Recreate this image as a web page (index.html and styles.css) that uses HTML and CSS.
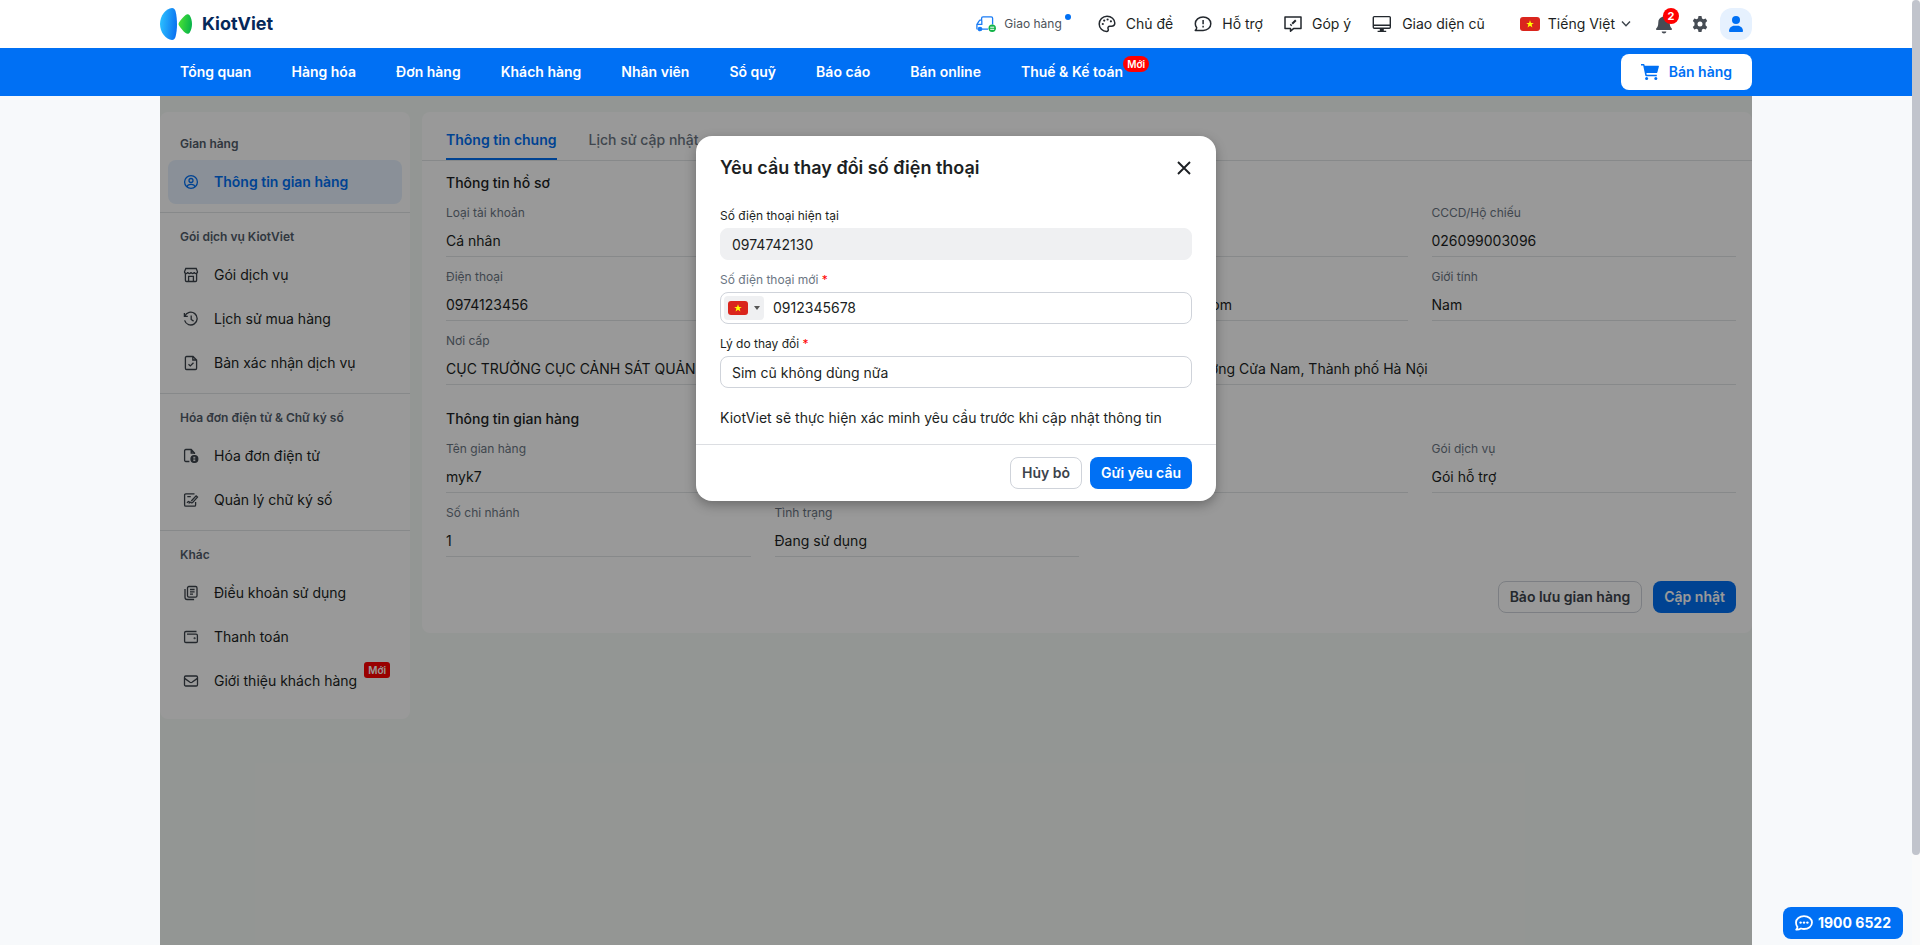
FILE: index.html
```html
<!DOCTYPE html>
<html lang="vi">
<head>
    <meta charset="UTF-8">
    <meta name="viewport" content="width=device-width, initial-scale=1.0">
    <title>KiotViet</title>
    <link rel="stylesheet" href="styles.css">
</head>
<body>

    <!-- Shared flag symbol -->
    <svg class="defs" aria-hidden="true">
        <symbol id="flag-vn" viewBox="0 0 20 14">
            <rect width="20" height="14" rx="3" fill="#da251d"/>
            <path d="M10 3.200l1 2.700h2.800l-2.200 1.700.8 2.800-2.400-1.700-2.400 1.700.8-2.800-2.200-1.700H9z" fill="#ff0"/>
        </symbol>
    </svg>

    <div class="page">

        <header class="topbar">
            <a href="#" class="logo">
                <svg width="32" height="32" viewBox="0 0 32 32">
                    <defs>
                        <linearGradient id="logoBlue" x1="0" x2="1" y1="0.4" y2="0.6">
                            <stop offset="0" stop-color="#2cc0ff"/>
                            <stop offset="1" stop-color="#0a70f0"/>
                        </linearGradient>
                        <linearGradient id="logoGreen" x1="0" x2="1" y1="0.4" y2="0.6">
                            <stop offset="0" stop-color="#4be234"/>
                            <stop offset="1" stop-color="#05b14a"/>
                        </linearGradient>
                    </defs>
                    <path d="M12 0c2 0 3 1.200 3.600 3.500C16.500 7 17 11.500 17 16s-.5 9-1.400 12.500C15 30.800 14 32 12 32 6 31.500 0 24.500 0 16S6 .5 12 0z" fill="url(#logoBlue)"/>
                    <path d="M19 14.500c2-3 4.500-6 6.600-7.600 1.600-1.100 3.400-.8 4.300.9 1.300 2.300 2.100 5 2.100 8.200s-.8 5.900-2.100 8.200c-.9 1.700-2.700 2-4.300.9-2.100-1.600-4.600-4.600-6.600-7.600-.6-1-.6-2 0-3z" fill="url(#logoGreen)"/>
                </svg>
                <span>KiotViet</span>
            </a>

            <nav class="topbar-links">
                <a href="#" class="delivery">
                    <svg width="20" height="16" viewBox="0 0 20 16" fill="none" stroke="#1a7cf5" stroke-width="1.300">
                        <path d="M5.600 4V2.200C5.600 1.400 6.200.8 7 .8h8.200c.8 0 1.400.6 1.400 1.400v6.300M6 13.200h6"/>
                        <path d="M6 4.200H4.300c-.6 0-1 .3-1.300.9L.9 8.400v4.100c0 .4.300.7.700.7M1 8.400h4.800V4.200"/>
                        <circle cx="4" cy="13" r="1.700" fill="#1a7cf5"/>
                        <circle cx="16.200" cy="12.300" r="3.700" fill="#12b347" stroke="none"/>
                        <path d="M14.200 11.200h4M14.200 13.300h4" stroke="#fff" stroke-width="1"/>
                    </svg>
                    Giao hàng<i class="dot"></i>
                </a>
                <a href="#">
                    <svg width="18" height="18" viewBox="0 0 18 18" fill="none" stroke="#23282e" stroke-width="1.500">
                        <path d="M9 1.200c4.400 0 7.800 3 7.800 6.900 0 2.200-1.500 3.200-3.500 3.200h-1.500c-1.500 0-2.300 1.300-1.700 2.500.6 1.300 0 2.700-1.500 2.700C4.600 16.500 1.200 13.200 1.200 9S4.600 1.200 9 1.200z"/>
                        <g fill="#23282e" stroke="none"><circle cx="4.800" cy="9" r="1.100"/><circle cx="6.200" cy="5.600" r="1.100"/><circle cx="9.600" cy="4.500" r="1.100"/><circle cx="12.900" cy="6.300" r="1.100"/></g>
                    </svg>
                    Chủ đề
                </a>
                <a href="#">
                    <svg width="18" height="18" viewBox="0 0 18 18" fill="none" stroke="#23282e" stroke-width="1.500" stroke-linejoin="round">
                        <path d="M1.300 15.400c.8-.8 1.300-1.600 1.400-2.700C1.800 11.500 1.300 10.200 1.300 8.700c0-3.800 3.500-6.700 7.800-6.700s7.700 2.900 7.700 6.700-3.400 6.700-7.700 6.700z"/>
                        <path d="M9.100 4.900v4.400M9.100 10.700v1.700"/>
                    </svg>
                    Hỗ trợ
                </a>
                <a href="#">
                    <svg width="18" height="18" viewBox="0 0 18 18" fill="none" stroke="#23282e" stroke-width="1.500" stroke-linejoin="round">
                        <path d="M1 2h16v11.600H9.500L6.500 16.300v-2.700H1z"/>
                        <path d="M11.800 5.200L8.200 8.800M7.500 9.500l-1 1" stroke-width="2"/>
                    </svg>
                    Góp ý
                </a>
                <a href="#">
                    <svg width="20" height="18" viewBox="0 0 20 18" fill="none" stroke="#23282e" stroke-width="1.400">
                        <rect x="1.300" y="1.600" width="17" height="11.600" rx="1"/>
                        <path d="M1.500 10.200h16.800M5.600 16.400h8.600" /><path d="M7.800 13.200h4v3h-4z" fill="#23282e" stroke="none"/>
                    </svg>
                    Giao diện cũ
                </a>
                <button type="button" class="language">
                    <svg width="20" height="14"><use href="#flag-vn"/></svg>
                    Tiếng Việt
                    <svg class="chevron" width="10" height="6" viewBox="0 0 10 6" fill="none" stroke="#3c434b" stroke-width="1.400"><path d="M1 .6l4 4.200L9 .6"/></svg>
                </button>
                <button type="button" class="icon-btn bell" aria-label="Thông báo">
                    <svg width="16" height="20" viewBox="0 0 16 20" fill="#464c54">
                        <path d="M8 1c.8 0 1.200.5 1.200 1.200v.5c2.800.6 4.500 2.800 4.500 5.500 0 3.200.6 4.700 1.900 6 .8.900.3 1.900-.8 1.900H1.200c-1.100 0-1.600-1-.8-1.900 1.300-1.300 1.900-2.800 1.900-6 0-2.700 1.700-4.900 4.500-5.500v-.5C6.800 1.500 7.200 1 8 1z"/>
                        <path d="M5.700 17.500h4.600c0 1.200-1 2-2.300 2s-2.300-.8-2.300-2z"/>
                    </svg>
                    <span class="count">2</span>
                </button>
                <button type="button" class="icon-btn" aria-label="Thiết lập">
                    <svg width="16" height="16" viewBox="0 0 16 16" fill="#464c54" fill-rule="evenodd">
                        <path d="M6.500 0h3l.5 2.400 1.500.8 2.200-.8 1.500 2.600-1.700 1.700v2.600l1.700 1.700-1.500 2.600-2.200-.8-1.500.8-.5 2.400h-3L6 13.600l-1.500-.8-2.200.8L.8 11l1.700-1.700V6.700L.8 5l1.500-2.600 2.200.8L6 2.400zM8 5.500a2.500 2.500 0 100 5 2.500 2.500 0 000-5z"/>
                    </svg>
                </button>
                <button type="button" class="avatar" aria-label="Tài khoản">
                    <svg width="14" height="16" viewBox="0 0 14 16" fill="#0070f4">
                        <circle cx="7" cy="4" r="4"/><path d="M0 15.200C0 12 2.400 9.700 5.300 9.700h3.400c2.900 0 5.300 2.300 5.300 5.500 0 .5-.4.8-.8.8H.8c-.4 0-.8-.3-.8-.8z"/>
                    </svg>
                </button>
            </nav>
        </header>

        <nav class="mainnav">
            <a href="#">Tổng quan</a>
            <a href="#">Hàng hóa</a>
            <a href="#">Đơn hàng</a>
            <a href="#">Khách hàng</a>
            <a href="#">Nhân viên</a>
            <a href="#">Sổ quỹ</a>
            <a href="#">Báo cáo</a>
            <a href="#">Bán online</a>
            <a href="#">Thuế &amp; Kế toán<span class="nav-badge">Mới</span></a>
            <button type="button" class="sell">
                <svg width="18" height="16" viewBox="0 0 18 16" fill="#0070f4">
                    <path d="M0 0h2.600c.5 0 .8.3.9.700L3.700 1.700h13.500c.5 0 .8.500.7.900l-1.500 5.600c-.1.500-.6.900-1.200.9H5.400l.3 1.600h10.100v1.500H5.200c-.5 0-.8-.3-.9-.7L2.200 1.500H0z"/>
                    <circle cx="5.600" cy="14.500" r="1.500"/><circle cx="14.800" cy="14.500" r="1.500"/>
                </svg>
                Bán hàng
            </button>
        </nav>

        <main class="content">

            <aside class="sidebar">
                <section>
                    <h2>Gian hàng</h2>
                    <a href="#" class="active">
                        <svg viewBox="0 0 16 16"><circle cx="8" cy="8" r="6.400"/><circle cx="8" cy="6.500" r="2"/><path d="M4 12.800c.3-1.700 1.700-2.500 4-2.500s3.700.8 4 2.500"/></svg>
                        Thông tin gian hàng
                    </a>
                </section>
                <section>
                    <h2>Gói dịch vụ KiotViet</h2>
                    <a href="#">
                        <svg viewBox="0 0 16 16"><path d="M2.800 1.500h10.400l1.300 3.300c0 1-.7 1.700-1.700 1.700-.9 0-1.600-.6-1.600-1.500 0 .9-.7 1.500-1.600 1.500S8 5.900 8 5c0 .9-.7 1.500-1.600 1.500S4.800 5.900 4.800 5c0 .9-.7 1.500-1.600 1.500-1 0-1.700-.7-1.700-1.700zM2.400 6.500v6.800c0 .7.500 1.200 1.200 1.200h8.800c.7 0 1.200-.5 1.200-1.200V6.500M5.600 14.500V9.400h4.800v5.100"/></svg>
                        Gói dịch vụ
                    </a>
                    <a href="#">
                        <svg viewBox="0 0 16 16"><path d="M1.400 2v3.400h3.400M1.800 5.200a6.400 6.400 0 11-.2 4.200M8.200 4.500v4l2.400 1.600"/></svg>
                        Lịch sử mua hàng
                    </a>
                    <a href="#">
                        <svg viewBox="0 0 16 16"><path d="M10 1.500H3.600c-.7 0-1.200.5-1.200 1.200v10.600c0 .7.500 1.200 1.200 1.200h8.800c.7 0 1.200-.5 1.200-1.200V5zM9.800 1.700V5h3.500M5.500 9.200l1.800 1.700 3.200-3.200"/></svg>
                        Bản xác nhận dịch vụ
                    </a>
                </section>
                <section>
                    <h2>Hóa đơn điện tử &amp; Chữ ký số</h2>
                    <a href="#">
                        <svg viewBox="0 0 16 16"><path d="M6.400 13.500H2.800c-.7 0-1.200-.5-1.200-1.200V2.700c0-.7.500-1.200 1.200-1.200h5.400L11.500 5v1M8.200 1.700V5h3.200"/><circle cx="11.400" cy="11" r="3.400" fill="currentColor"/><path d="M10.300 9.300h2M10.300 11h2M10.300 12.600h2" stroke="#fff" stroke-width="1"/></svg>
                        Hóa đơn điện tử
                    </a>
                    <a href="#">
                        <svg viewBox="0 0 16 16"><path d="M11.500 1.900H2.800c-.7 0-1.200.5-1.200 1.200v9.800c0 .7.500 1.200 1.200 1.200h8.600c.7 0 1.200-.5 1.200-1.200V10M4.300 4.700h3.500M4 10.800c1.400-1.800 2.200-1.800 2.300 0 1-.9 1.500-.8 2 0l1.200-.2 5-5.500-1.400-1.300L8.300 9"/></svg>
                        Quản lý chữ ký số
                    </a>
                </section>
                <section>
                    <h2>Khác</h2>
                    <a href="#">
                        <svg viewBox="0 0 16 16"><rect x="4.500" y="1.500" width="9.500" height="10.600" rx="1.400"/><path d="M2 4v8.300c0 1.200.9 2.200 2.100 2.200h7M7 4.500h4.600M7 6.800h4.600M7 9.100h3"/></svg>
                        Điều khoản sử dụng
                    </a>
                    <a href="#">
                        <svg viewBox="0 0 16 16"><path d="M13.500 2.500H3c-.8 0-1.400.6-1.400 1.300v8.400c0 .7.600 1.300 1.300 1.300h10.200c.7 0 1.300-.6 1.300-1.300V6.400c0-.7-.6-1.300-1.300-1.300H4"/><circle cx="11.600" cy="9.200" r=".4"/></svg>
                        Thanh toán
                    </a>
                    <a href="#">
                        <svg viewBox="0 0 16 16"><rect x="1.500" y="3" width="13" height="10" rx="1.200"/><path d="M1.600 5.400L7 9.300c.6.400 1.400.4 2 0l5.400-3.900"/></svg>
                        Giới thiệu khách hàng<span class="side-badge">Mới</span>
                    </a>
                </section>
            </aside>

            <section class="panel">
                <div class="tabs">
                    <a href="#" class="tab selected">Thông tin chung</a>
                    <a href="#" class="tab">Lịch sử cập nhật</a>
                </div>

                <div class="panel-body">
                    <h3>Thông tin hồ sơ</h3>
                    <dl class="fields">
                        <div class="field"><dt>Loại tài khoản</dt><dd>Cá nhân</dd></div>
                        <div class="field"><dt>Họ và tên</dt><dd>Nguyễn Văn A</dd></div>
                        <div class="field"><dt>Ngày sinh</dt><dd>01/01/1999</dd></div>
                        <div class="field"><dt>CCCD/Hộ chiếu</dt><dd>026099003096</dd></div>
                        <div class="field"><dt>Điện thoại</dt><dd>0974123456</dd></div>
                        <div class="field"><dt>Ngày cấp</dt><dd>01/01/2022</dd></div>
                        <div class="field"><dt>Email</dt><dd>mykhi7@gmail.com</dd></div>
                        <div class="field"><dt>Giới tính</dt><dd>Nam</dd></div>
                        <div class="field wide"><dt>Nơi cấp</dt><dd>CỤC TRƯỞNG CỤC CẢNH SÁT QUẢN LÝ HÀNH CHÍNH VỀ TRẬT TỰ XÃ HỘI</dd></div>
                        <div class="field wide"><dt>Địa chỉ</dt><dd>Hàng Bông, Phường Cửa Nam, Thành phố Hà Nội</dd></div>
                    </dl>

                    <h3>Thông tin gian hàng</h3>
                    <dl class="fields">
                        <div class="field"><dt>Tên gian hàng</dt><dd>myk7</dd></div>
                        <div class="field"><dt>Ngành hàng</dt><dd>Thời trang</dd></div>
                        <div class="field"><dt>Ngày tạo</dt><dd>01/01/2025</dd></div>
                        <div class="field"><dt>Gói dịch vụ</dt><dd>Gói hỗ trợ</dd></div>
                        <div class="field"><dt>Số chi nhánh</dt><dd>1</dd></div>
                        <div class="field"><dt>Tình trạng</dt><dd>Đang sử dụng</dd></div>
                    </dl>

                    <div class="actions">
                        <button type="button" class="btn btn-outline">Bảo lưu gian hàng</button>
                        <button type="button" class="btn btn-primary">Cập nhật</button>
                    </div>
                </div>
            </section>

            <div class="overlay">
                <form class="modal" role="dialog" aria-labelledby="modalTitle">
                    <div class="modal-header">
                        <h2 id="modalTitle">Yêu cầu thay đổi số điện thoại</h2>
                        <button type="button" class="close" aria-label="Đóng">
                            <svg width="16" height="16" viewBox="0 0 16 16" stroke="#1c1f23" stroke-width="1.900"><path d="M2 2l12 12M14 2L2 14"/></svg>
                        </button>
                    </div>

                    <div class="modal-body">
                        <label for="currentPhone">Số điện thoại hiện tại</label>
                        <input type="text" id="currentPhone" class="input" value="0974742130" disabled>

                        <label for="newPhone" class="muted">Số điện thoại mới <em>*</em></label>
                        <div class="input phone">
                            <button type="button" class="country" aria-label="Việt Nam">
                                <svg width="20" height="14"><use href="#flag-vn"/></svg>
                                <svg width="6" height="4" viewBox="0 0 6 4"><path d="M0 0h6L3 4z" fill="#555"/></svg>
                            </button>
                            <input type="tel" id="newPhone" value="0912345678">
                        </div>

                        <label for="reason">Lý do thay đổi <em>*</em></label>
                        <input type="text" id="reason" class="input" value="Sim cũ không dùng nữa">

                        <p>KiotViet sẽ thực hiện xác minh yêu cầu trước khi cập nhật thông tin</p>
                    </div>

                    <div class="modal-footer">
                        <button type="button" class="btn btn-outline">Hủy bỏ</button>
                        <button type="submit" class="btn btn-primary">Gửi yêu cầu</button>
                    </div>
                </form>
            </div>
        </main>
    </div>

    <a href="tel:19006522" class="hotline">
        <svg width="18" height="16" viewBox="0 0 18 16" fill="none" stroke="#fff" stroke-width="1.800" stroke-linejoin="round">
            <path d="M1.200 14.600c.9-.9 1.300-1.800 1.200-2.700C1.500 10.700 1 9.300 1 7.600 1 3.900 4.500 1.200 9 1.200s8 2.700 8 6.400-3.500 6.400-8 6.400c-1.100 0-2.100-.2-3-.5-1.300.8-3 1.200-4.800 1.100z"/>
            <g fill="#fff" stroke="none"><circle cx="5.600" cy="7.600" r="1.200"/><circle cx="9" cy="7.600" r="1.200"/><circle cx="12.400" cy="7.600" r="1.200"/></g>
        </svg>
        1900 6522
    </a>

    <div class="scrollbar"><div class="thumb"></div></div>

</body>
</html>
```
FILE: styles.css
```css
* {
    margin: 0;
    padding: 0;
    box-sizing: border-box;
}

body {
    font-family: Inter, "Noto Sans", sans-serif;
    font-size: 14px;
    line-height: 20px;
    color: #1c1f23;
    background-color: #f7f9fb;
}

a {
    color: inherit;
    text-decoration: none;
}

button,
input {
    font: inherit;
    color: inherit;
    border: none;
    background: none;
}

button {
    cursor: pointer;
}

svg {
    flex-shrink: 0;
}

.defs {
    position: absolute;
    width: 0;
    height: 0;
}

.page {
    margin-right: 8px;
}

/* Top bar */
.topbar {
    display: flex;
    justify-content: space-between;
    align-items: center;
    height: 48px;
    padding: 0 160px;
    background-color: #ffffff;
}

.logo {
    display: flex;
    align-items: center;
    gap: 10px;
    font-size: 18px;
    font-weight: 700;
    color: #05285a;
}

.topbar-links {
    display: flex;
    align-items: center;
}

.topbar-links a {
    display: flex;
    align-items: center;
    gap: 10px;
    margin-right: 21px;
}

.topbar-links .delivery {
    gap: 8px;
    margin-right: 27px;
    font-size: 12px;
    color: #4b5259;
}

.dot {
    width: 6px;
    height: 6px;
    margin: 0 0 14px -5px;
    border-radius: 50%;
    background-color: #0070f4;
}

.language {
    display: flex;
    align-items: center;
    gap: 8px;
    margin-left: 14px;
    margin-right: 25px;
}

.chevron {
    margin-left: -2px;
}

.icon-btn {
    display: flex;
    position: relative;
    margin-right: 20px;
}

.count {
    position: absolute;
    top: -6px;
    left: 7px;
    width: 16px;
    height: 16px;
    border-radius: 50%;
    background-color: #ff0000;
    color: #ffffff;
    font-size: 11px;
    font-weight: 700;
    line-height: 16px;
}

.icon-btn + .avatar {
    margin-left: -8px;
}

.avatar {
    display: flex;
    justify-content: center;
    align-items: center;
    width: 32px;
    height: 32px;
    border-radius: 12px;
    background-color: #e6f1fe;
}

/* Main navigation */
.mainnav {
    display: flex;
    align-items: center;
    height: 48px;
    padding: 0 160px;
    background-color: #0070f4;
    color: #ffffff;
    font-weight: 600;
}

.mainnav a {
    position: relative;
    padding: 0 20px;
}

.nav-badge {
    position: absolute;
    top: -6px;
    right: -6px;
    padding: 0 4px;
    border-radius: 8px;
    background-color: #ff0000;
    font-size: 10px;
    line-height: 16px;
}

.sell {
    display: flex;
    align-items: center;
    gap: 10px;
    height: 36px;
    margin-left: auto;
    padding: 0 20px;
    border-radius: 8px;
    background-color: #ffffff;
    color: #0070f4;
}

/* Content */
.content {
    display: flex;
    align-items: flex-start;
    gap: 12px;
    position: relative;
    min-height: calc(100vh - 96px);
    margin: 0 160px;
    padding-top: 16px;
    background-color: #f6faf7;
}

.sidebar {
    flex: 0 0 250px;
    padding: 8px 0;
    border-radius: 8px;
    background-color: #ffffff;
}

.sidebar section {
    padding: 8px;
    border-bottom: 1px solid #e2e4e7;
}

.sidebar section:last-child {
    border-bottom: none;
}

.sidebar h2 {
    padding-left: 12px;
    color: #525d6a;
    font-size: 12px;
    font-weight: 600;
    line-height: 32px;
}

.sidebar a {
    display: flex;
    align-items: center;
    gap: 15px;
    height: 44px;
    padding: 0 0 0 15px;
    border-radius: 8px;
    white-space: nowrap;
}

.sidebar a svg {
    width: 16px;
    height: 16px;
    fill: none;
    stroke: currentColor;
    stroke-width: 1.3;
    color: #3c434b;
}

.sidebar .active {
    background-color: #e6f1fe;
    color: #0070f4;
    font-weight: 600;
}

.sidebar .active svg {
    color: #0070f4;
}

.side-badge {
    margin: -22px 0 0 -8px;
    padding: 0 4px;
    border-radius: 3px;
    background-color: #ff0000;
    color: #ffffff;
    font-size: 10px;
    font-weight: 600;
    line-height: 16px;
}

.panel {
    flex: 1;
    min-width: 0;
    border-radius: 8px;
    background-color: #ffffff;
}

.tabs {
    display: flex;
    gap: 32px;
    padding: 0 24px;
    border-bottom: 1px solid #e2e4e7;
}

.tab {
    height: 48px;
    padding-top: 18px;
    color: #6b7683;
    font-weight: 500;
}

.tab.selected {
    border-bottom: 2px solid #0070f4;
    color: #0070f4;
    font-weight: 600;
}

.panel-body {
    padding: 12px 16px 20px 24px;
}

.panel-body h3 {
    font-size: 14px;
    font-weight: 500;
}

.fields {
    display: grid;
    grid-template-columns: repeat(4, minmax(0, 1fr));
    column-gap: 24px;
    margin-bottom: 24px;
}

.field {
    padding: 11px 0 5px;
    border-bottom: 1px solid #e2e4e7;
    white-space: nowrap;
}

.field.wide {
    grid-column: span 2;
}

.field dt {
    margin-bottom: 9px;
    color: #6b7683;
    font-size: 12px;
    line-height: 18px;
}

.actions {
    display: flex;
    justify-content: flex-end;
    gap: 11px;
}

.btn {
    height: 32px;
    padding: 0 11px;
    border-radius: 8px;
    font-weight: 600;
}

.btn-outline {
    border: 1px solid #cfd3da;
    color: #3c434b;
    background-color: #ffffff;
}

.btn-primary {
    background-color: #0070f4;
    color: #ffffff;
}

/* Modal */
.overlay {
    position: absolute;
    inset: 0;
    display: flex;
    justify-content: center;
    align-items: flex-start;
    padding-top: 40px;
    background-color: rgba(0, 0, 0, 0.4);
}

.modal {
    width: 520px;
    max-width: 100%;
    border-radius: 16px;
    background-color: #ffffff;
    box-shadow: 0 4px 12px rgba(0, 0, 0, 0.3);
}

.modal-header {
    display: flex;
    justify-content: space-between;
    align-items: center;
    height: 64px;
    padding: 0 24px;
}

.modal-header h2 {
    font-size: 18px;
    font-weight: 600;
}

.close {
    display: flex;
}

.modal-body {
    padding: 4px 24px 16px;
}

.modal-body label {
    display: block;
    padding: 2px 0;
    font-size: 12px;
}

.modal-body label.muted {
    color: #6b7683;
}

.modal-body em {
    color: #ff0000;
    font-style: normal;
}

.input {
    display: block;
    width: 100%;
    height: 32px;
    margin-bottom: 8px;
    padding: 0 11px;
    border: 1px solid #cfd3da;
    border-radius: 8px;
}

.input:disabled {
    border-color: #eff0f2;
    background-color: #eff0f2;
}

.phone {
    display: flex;
    align-items: center;
    gap: 9px;
    padding: 0 3px;
}

.phone input {
    flex: 1;
    min-width: 0;
    outline: none;
}

.country {
    display: flex;
    justify-content: center;
    align-items: center;
    gap: 6px;
    width: 40px;
    height: 24px;
    border-radius: 4px;
    background-color: #eff0f2;
}

.modal-body p {
    padding-top: 12px;
}

.modal-footer {
    display: flex;
    justify-content: flex-end;
    gap: 8px;
    padding: 12px 24px;
    border-top: 1px solid #dcdee2;
}

/* Floating hotline button */
.hotline {
    position: fixed;
    right: 17px;
    bottom: 6px;
    display: flex;
    align-items: center;
    gap: 5px;
    height: 32px;
    padding: 0 12px;
    border-radius: 8px;
    background-color: #0070f4;
    color: #ffffff;
    font-weight: 700;
}

.scrollbar {
    position: fixed;
    top: 0;
    right: 0;
    width: 8px;
    height: 100%;
    background-color: #fafafa;
}

.thumb {
    height: calc(100% - 90px);
    border-radius: 4px;
    background-color: #c1c4cc;
}
```
